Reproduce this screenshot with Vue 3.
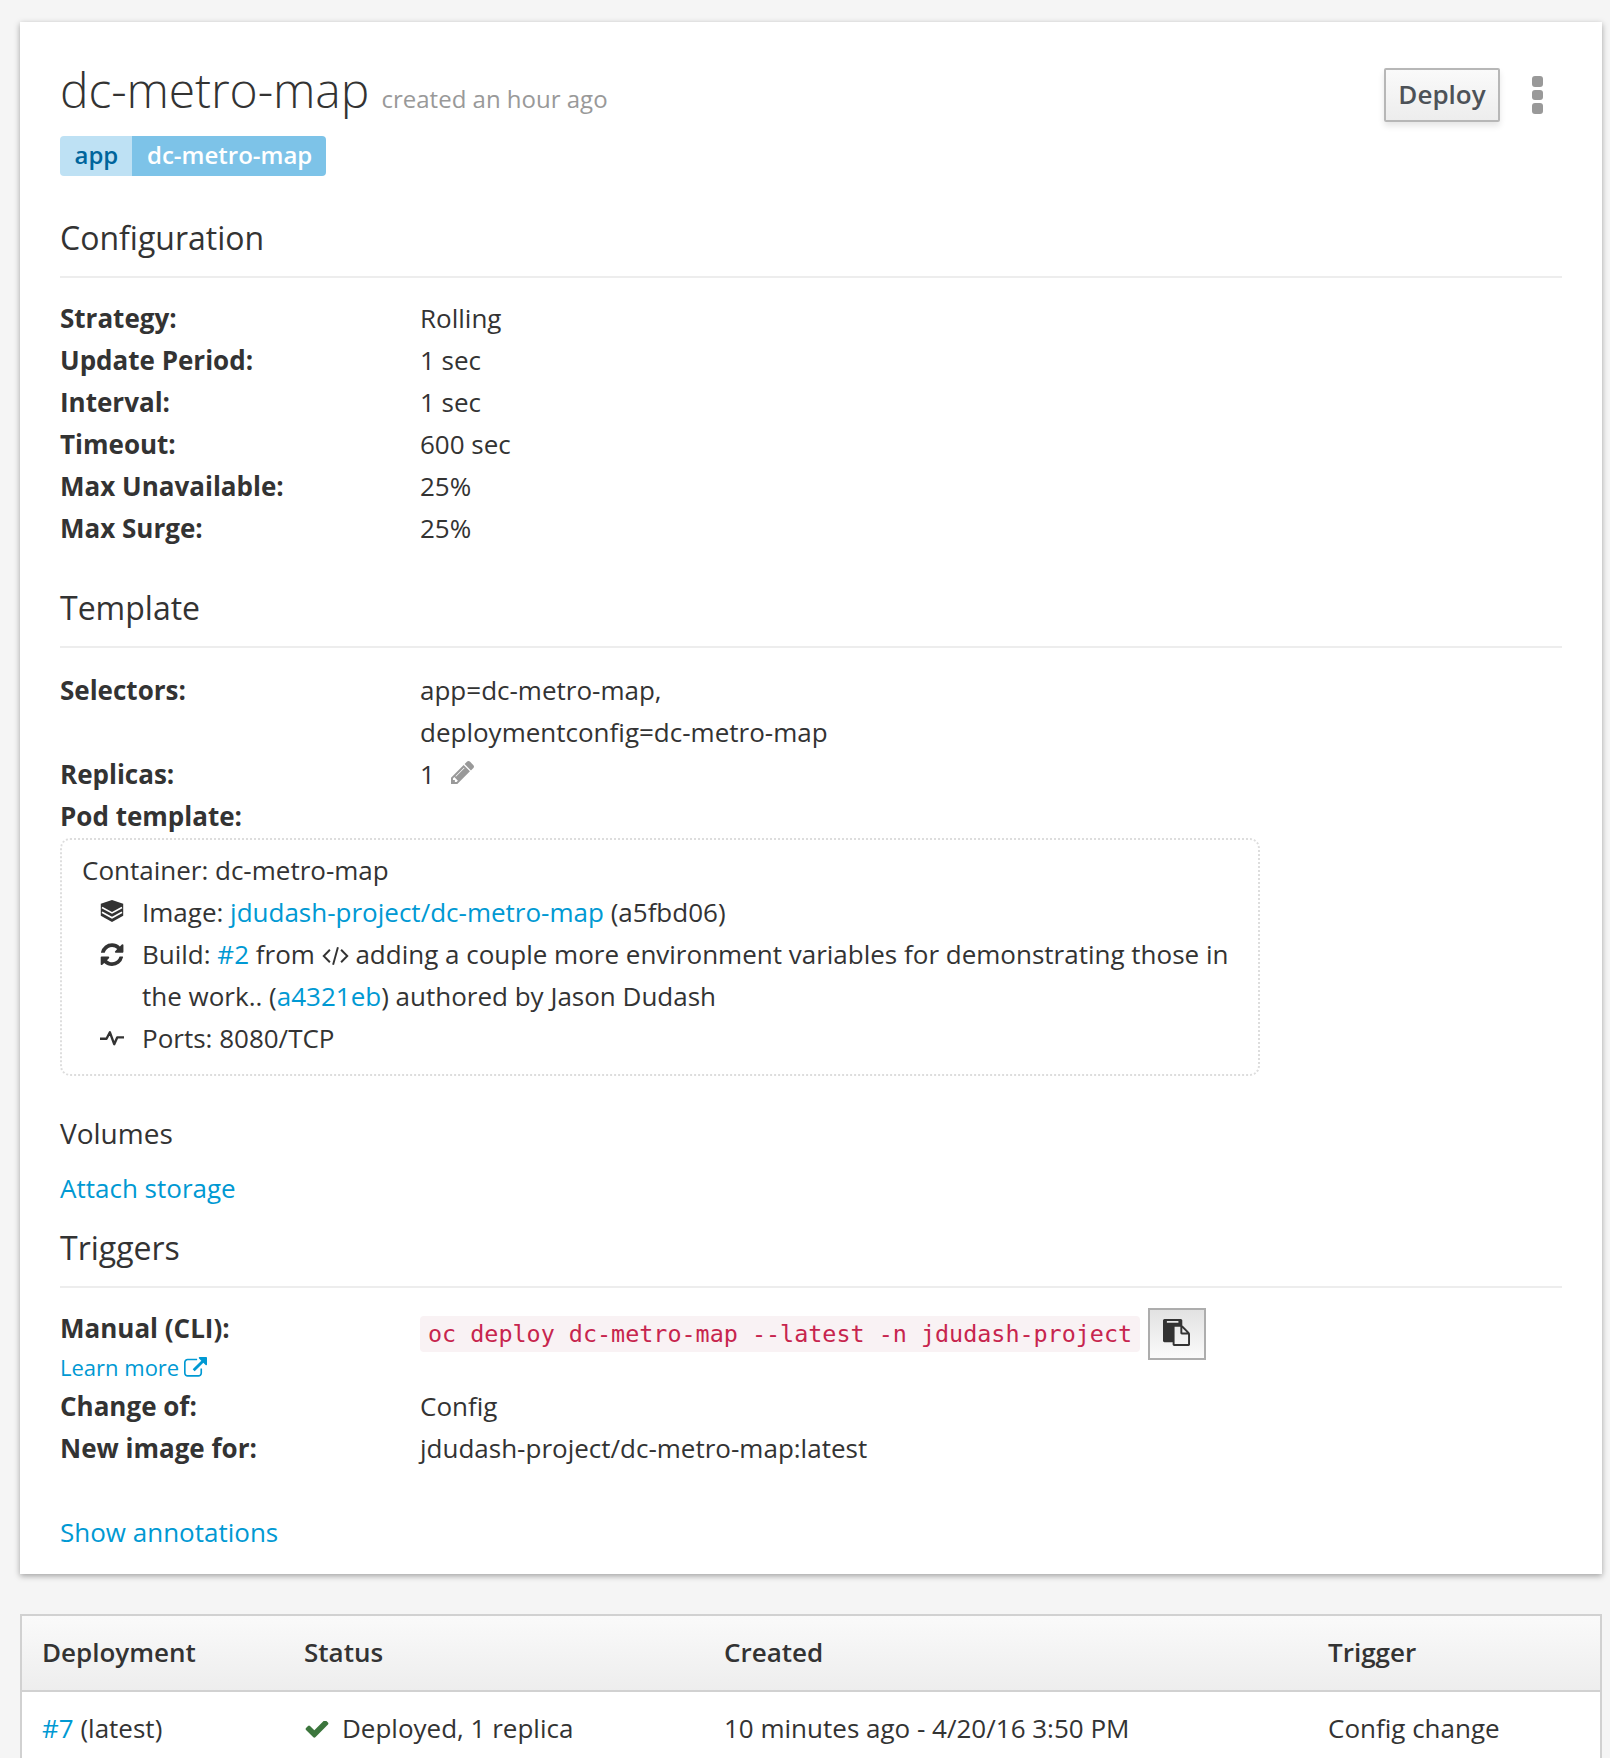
<script setup>
const configuration = [
  ['Strategy:', 'Rolling'],
  ['Update Period:', '1 sec'],
  ['Interval:', '1 sec'],
  ['Timeout:', '600 sec'],
  ['Max Unavailable:', '25%'],
  ['Max Surge:', '25%'],
]
const columns = ['Deployment', 'Status', 'Created', 'Trigger']
</script>

<template>
  <div class="page">
    <main class="card">
      <header class="head">
        <div>
          <h1>dc-metro-map <small>created an hour ago</small></h1>
          <div class="label"><span class="key">app</span><span class="val">dc-metro-map</span></div>
        </div>
        <div class="actions">
          <button class="deploy">Deploy</button>
          <button class="kebab" aria-label="More actions"><i></i><i></i><i></i></button>
        </div>
      </header>

      <h3>Configuration</h3>
      <dl class="config">
        <template v-for="[k, v] in configuration" :key="k"><dt>{{ k }}</dt><dd>{{ v }}</dd></template>
      </dl>

      <h3 class="template-title">Template</h3>
      <dl class="selectors">
        <dt>Selectors:</dt>
        <dd>app=dc-metro-map,<br>deploymentconfig=dc-metro-map</dd>
        <dt>Replicas:</dt>
        <dd class="replicas">1
          <svg class="pencil" width="23" height="23" viewBox="0 149 1515 1515">
            <path fill="#999" d="M363 1536l91-91-235-235-91 91v107h128v128h107zm523-928q0-22-22-22-10 0-17 7l-542 542q-7 7-7 17 0 22 22 22 10 0 17-7l542-542q7-7 7-17zm-54-192l416 416-832 832h-416v-416zm683 96q0 53-37 90l-166 166-416-416 166-165q36-38 90-38 53 0 91 38l235 234q37 39 37 91z" />
          </svg>
        </dd>
        <dt>Pod template:</dt>
      </dl>

      <section class="pod">
        <div>Container: dc-metro-map</div>
        <div class="item">
          <svg width="24" height="30" viewBox="0 0 24 30">
            <path fill="#333" d="M12 3L23.2 6.8V18.7L12 25L.8 18.7V6.8Z" />
            <path fill="none" stroke="#fff" stroke-width="1.7" d="M2 10.4L12 15.9L22 10.4M2 15.2L12 20.7L22 15.2" />
          </svg>
          <p>Image: <a>jdudash-project/dc-metro-map</a> (a5fbd06)</p>
        </div>
        <div class="item">
          <svg width="24" height="30" viewBox="0 0 24 30">
            <path fill="#333" transform="translate(.7 2.4) scale(.0148)" d="M1511 1056q0 5-1 7-64 268-268 434.5t-478 166.5q-146 0-282.5-55t-243.5-157l-129 129q-19 19-45 19t-45-19-19-45v-448q0-26 19-45t45-19h448q26 0 45 19t19 45-19 45l-137 137q71 66 161 102t187 36q134 0 250-65t186-179q11-17 53-117 8-23 30-23h192q13 0 22.5 9.5t9.5 22.5zm25-800v448q0 26-19 45t-45 19h-448q-26 0-45-19t-19-45 19-45l138-138q-148-137-349-137-134 0-250 65t-186 179q-11 17-53 117-8 23-30 23h-199q-13 0-22.5-9.5t-9.5-22.5v-7q65-268 270-434.5t480-166.5q146 0 284 55.5t245 156.5l130-129q19-19 45-19t45 19 19 45z" />
          </svg>
          <p>Build: <a>#2</a> from
            <svg class="code-icon" width="27" height="20" viewBox="0 0 28 20">
              <path fill="none" stroke="#333" stroke-width="2" d="M8.2 3.5L1.8 10L8.2 16.5M19.8 3.5L26.2 10L19.8 16.5M16.5 1L11.5 19" />
            </svg>
            adding a couple more environment variables for demonstrating those in the work.. (<a>a4321eb</a>) authored by Jason Dudash</p>
        </div>
        <div class="item">
          <svg width="24" height="30" viewBox="0 0 24 30">
            <path fill="none" stroke="#333" stroke-width="2.4" stroke-linejoin="round" d="M0 15.8H6.5L9.9 9.3L14.2 21.2L17.2 14.4H24" />
          </svg>
          <p>Ports: 8080/TCP</p>
        </div>
      </section>

      <h4>Volumes</h4>
      <a class="attach">Attach storage</a>

      <h3 class="triggers-title">Triggers</h3>
      <dl class="triggers">
        <dt>
          Manual (CLI):
          <a class="learn">Learn more
            <svg width="23" height="20" viewBox="0 0 1792 1558">
              <path fill="#0099d3" d="M1408 928v320q0 119-84.5 203.5t-203.5 84.5h-832q-119 0-203.5-84.5t-84.5-203.5v-832q0-119 84.5-203.5t203.5-84.5h704q14 0 23 9t9 23v64q0 14-9 23t-23 9h-704q-66 0-113 47t-47 113v832q0 66 47 113t113 47h832q66 0 113-47t47-113v-320q0-14 9-23t23-9h64q14 0 23 9t9 23zm384-864v512q0 26-19 45t-45 19-45-19l-176-176-652 652q-10 10-23 10t-23-10l-114-114q-10-10-10-23t10-23l652-652-176-176q-19-19-19-45t19-45 45-19h512q26 0 45 19t19 45z" />
            </svg>
          </a>
        </dt>
        <dd class="cli">
          <code>oc deploy dc-metro-map --latest -n jdudash-project</code>
          <button class="copy" aria-label="Copy">
            <svg width="27" height="27" viewBox="0 0 1792 1792">
              <path fill="#333" d="M768 1664h896v-640h-416q-40 0-68-28t-28-68v-416h-384v1152zm256-1440v-64q0-13-9.5-22.5t-22.5-9.5h-704q-13 0-22.5 9.5t-9.5 22.5v64q0 13 9.5 22.5t22.5 9.5h704q13 0 22.5-9.5t9.5-22.5zm256 672h299l-299-299v299zm512 128v672q0 40-28 68t-68 28h-960q-40 0-68-28t-28-68v-160h-544q-40 0-68-28t-28-68v-1344q0-40 28-68t68-28h1088q40 0 68 28t28 68v328q21 13 36 28l408 408q28 28 48 76t20 88z" />
            </svg>
          </button>
        </dd>
        <dt>Change of:</dt>
        <dd>Config</dd>
        <dt>New image for:</dt>
        <dd>jdudash-project/dc-metro-map:latest</dd>
      </dl>

      <a class="annotations">Show annotations</a>
    </main>

    <table class="deployments">
      <thead>
        <tr><th v-for="c in columns" :key="c">{{ c }}</th></tr>
      </thead>
      <tbody>
        <tr>
          <td><a>#7</a> (latest)</td>
          <td>
            <svg class="check" width="24" height="18" viewBox="80 390 1632 1224">
              <path fill="#3c763d" d="M1671 566q0 40-28 68l-724 724-136 136q-28 28-68 28t-68-28l-136-136-362-362q-28-28-28-68t28-68l136-136q28-28 68-28t68 28l294 295 656-657q28-28 68-28t68 28l136 136q28 28 28 68z" />
            </svg>Deployed, 1 replica
          </td>
          <td>10 minutes ago - 4/20/16 3:50 PM</td>
          <td>Config change</td>
        </tr>
      </tbody>
    </table>
  </div>
</template>

<style>
body {
  margin: 0;
  background: #f5f5f5;
}
</style>

<style scoped>
.page {
  box-sizing: border-box;
  height: 1758px;
  overflow: hidden;
  padding: 22px 8px 0 20px;
  background: #f5f5f5;
  color: #333;
  font: 26px/42px "Open Sans", sans-serif;
}
.card {
  box-sizing: border-box;
  height: 1552px;
  padding: 40px 40px 0;
  background: #fff;
  box-shadow: 0 2px 6px rgba(3, 3, 3, 0.35);
}
a {
  color: #0099d3;
}
.head {
  display: flex;
  justify-content: space-between;
  height: 136px;
}
h1 {
  margin: 0;
  height: 55px;
  font-size: 48px;
  font-weight: 300;
  line-height: 55px;
  letter-spacing: -0.1px;
  white-space: nowrap;
}
h1 small {
  color: #999;
  font-size: 24px;
  font-weight: 400;
  line-height: 1;
  letter-spacing: 0;
}
.label {
  display: flex;
  width: fit-content;
  margin-top: 19px;
  border-radius: 4px;
  overflow: hidden;
  font-size: 24px;
  font-weight: 600;
  line-height: 38px;
  height: 40px;
}
.key {
  box-sizing: border-box;
  width: 72px;
  padding: 0 0 0 14.5px;
  background: #bee1f4;
  color: #00659c;
}
.val {
  box-sizing: border-box;
  width: 194px;
  padding: 0 0 0 15px;
  background: #7dc3e8;
  color: #fff;
}
.actions {
  display: flex;
  align-items: flex-start;
  gap: 31.5px;
  padding: 6px 19.5px 0 0;
}
.deploy {
  box-sizing: border-box;
  width: 116px;
  height: 54px;
  padding: 0 0 2px;
  border: 2px solid #b7b7b7;
  border-radius: 2px;
  background: linear-gradient(#fafafa, #ededed);
  box-shadow: 0 4px 6px rgba(3, 3, 3, 0.1);
  color: #4d5258;
  font: 600 26px/46px "Open Sans", sans-serif;
}
.kebab {
  display: flex;
  flex-direction: column;
  gap: 3px;
  padding: 8px 0 0;
  border: 0;
  background: none;
}
.kebab i {
  width: 11px;
  height: 10.7px;
  border-radius: 3px;
  background: #999;
}
h3 {
  box-sizing: border-box;
  height: 80px;
  margin: 0 0 19px;
  padding-top: 20px;
  border-bottom: 2px solid #ededed;
  font-size: 32px;
  font-weight: 400;
  line-height: 40px;
}
dl {
  display: grid;
  grid-template-columns: 360px 1fr;
  margin: 0;
}
dt {
  font-weight: 700;
}
dd {
  margin: 0;
}
.template-title {
  margin-top: 19px;
  margin-bottom: 21px;
}
.pencil {
  margin-left: 9px;
}
.pod {
  box-sizing: border-box;
  width: 1200px;
  height: 238px;
  margin-top: 1px;
  padding: 9px 20px;
  border: 2px dotted #ddd;
  border-radius: 10px;
}
.item {
  display: flex;
  align-items: flex-start;
  gap: 18px;
  padding-left: 18px;
}
.item > svg {
  flex: none;
  margin-top: 6px;
}
.item p {
  margin: 0;
}
.code-icon {
  vertical-align: -2px;
}
h4 {
  margin: 36px 0 0;
  font-size: 28px;
  font-weight: 400;
  line-height: 42px;
}
.attach {
  display: block;
  margin-top: 13px;
}
.triggers-title {
  height: 79px;
  padding-top: 19px;
}
.triggers {
  grid-template-rows: 78px 42px 42px;
}
.learn {
  display: block;
  font-size: 22px;
  font-weight: 400;
  line-height: 36px;
}
.learn svg {
  margin-left: -1px;
  vertical-align: -1px;
}
.cli {
  display: flex;
  align-items: flex-start;
  gap: 8px;
}
code {
  box-sizing: border-box;
  width: 720px;
  height: 36px;
  margin-top: 9px;
  padding: 0 8px;
  border-radius: 4px;
  background: #f9f2f4;
  color: #c7254e;
  font: 23.4px/36px "DejaVu Sans Mono", monospace;
  white-space: nowrap;
}
.copy {
  display: flex;
  box-sizing: border-box;
  width: 58px;
  height: 52px;
  margin-top: 1px;
  padding: 9px 0 0 13px;
  border: 2px solid #adadad;
  background: linear-gradient(#e2e2e2, #fafafa);
}
.annotations {
  display: block;
  margin-top: 42px;
}
.deployments {
  width: 1582px;
  margin-top: 40px;
  border: 2px solid #d1d1d1;
  border-spacing: 0;
  table-layout: fixed;
  background: #fff;
  text-align: left;
}
th {
  box-sizing: border-box;
  height: 76px;
  padding: 15px 0 0 20px;
  border-bottom: 2px solid #d1d1d1;
  font-weight: 600;
  vertical-align: top;
}
thead tr {
  background: linear-gradient(#fafafa, #ededed);
}
th:nth-child(1) { width: 262px; }
th:nth-child(2) { width: 420px; }
th:nth-child(3) { width: 604px; }
td {
  box-sizing: border-box;
  height: 84px;
  padding: 15px 0 0 20px;
  vertical-align: top;
}
.check {
  margin: 0 13px 0 1px;
  vertical-align: -1px;
}
</style>
